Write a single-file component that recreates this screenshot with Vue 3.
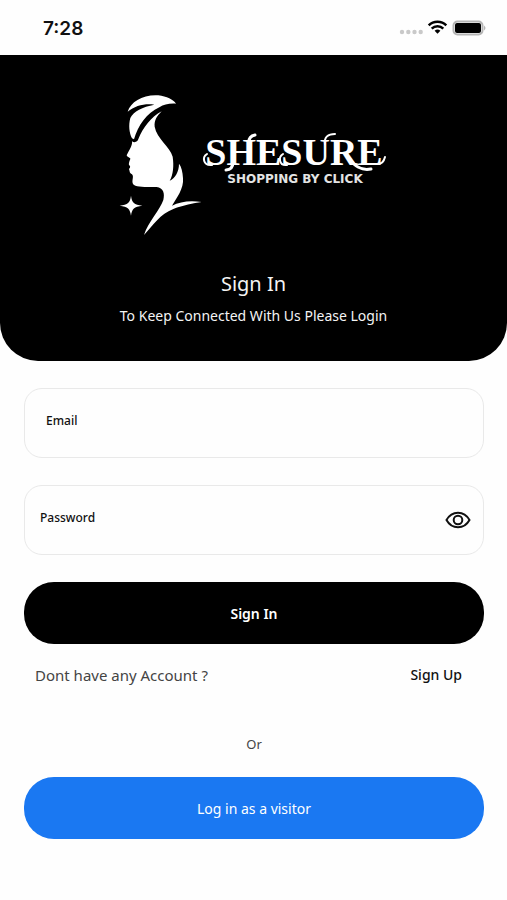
<script setup>
import { ref } from 'vue'

const email = ref('')
const password = ref('')
const visible = ref(false)
</script>

<template>
  <div class="screen">
    <div class="status">
      <span class="time">7:28</span>
      <svg class="indicators" width="88" height="16" viewBox="0 0 88 16" aria-hidden="true">
        <g fill="#c9c9c9">
          <circle cx="3" cy="12" r="2.200" />
          <circle cx="9.300" cy="12" r="2.200" />
          <circle cx="15.500" cy="12" r="2.200" />
          <circle cx="21.700" cy="12" r="2.200" />
        </g>
        <g fill="none" stroke="#000" stroke-width="2.500">
          <path d="M29.700 5.300a12.500 12.500 0 0 1 17.600 0" />
          <path d="M32.700 8.600a8.300 8.300 0 0 1 11.600 0" />
        </g>
        <path d="M38.500 13.700l-2.900-2.900a4.300 4.300 0 0 1 5.800 0z" />
        <rect x="54.500" y="1.500" width="29" height="13" rx="4" fill="#fff" stroke="#b5b5b5" stroke-width="2" />
        <rect x="56" y="3" width="26" height="10" rx="2" />
        <path d="M85 5.500q3 2.500 0 5z" fill="#b5b5b5" />
      </svg>
    </div>

    <header class="hero">
      <svg class="logo" viewBox="0 0 285 160" role="img" aria-label="Shesure, shopping by click">
        <g transform="translate(-1 0) scale(.33333)" fill="#fff">
          <path d="M53 80C62 50 100 28 145 31C170 34 190 44 198 56C176 55 162 58 148 67C110 84 84 122 72 163L66 160C58 145 55 120 61 99C70 80 98 65 133 59C104 55 75 62 53 80Z" />
          <path d="M155 79C124 95 98 130 86 160C83 172 73 174 66 169C68 181 58 195 50 211C52 218 61 217 61 222C57 231 56 236 57 240C63 245 60 249 57 252C60 260 58 264 66 268C73 276 64 286 69 297C77 307 104 306 140 306C160 308 165 325 160 345C150 375 115 410 102 450C130 420 150 387 190 372C220 360 250 355 275 351C240 345 210 350 186 362C200 340 222 310 219 280C218 260 214 245 207 236C207 260 195 280 179 287C190 270 192 240 188 215C180 185 140 160 134 125C132 105 142 92 155 79Z" />
          <path d="M63 332C66 353 72 359 97 362C72 365 66 371 63 392C60 371 54 365 29 362C54 359 60 353 63 332Z" />
        </g>
        <text class="wordmark" x="183" y="80" text-anchor="middle">SHESURE</text>
        <g class="swash">
          <path d="M96 69C91 72 92 81 101 80" />
          <path class="broad" d="M122 76C122 81 120 85 115 85" />
          <path class="broad" d="M138 60C137 54 139 51 144 50" />
          <path d="M172 69C167 72 168 81 176 80" />
          <path d="M214 59C213 52 217 49 224 49" />
          <path class="broad" d="M238 73C243 81 251 86 260 84" />
          <path d="M267 79C271 79 273 76 274 72" />
        </g>
        <text class="tagline" x="184" y="98" text-anchor="middle">SHOPPING BY CLICK</text>
      </svg>
      <h1>Sign In</h1>
      <p>To Keep Connected With Us Please Login</p>
    </header>

    <form class="form" @submit.prevent>
      <div class="field email">
        <label for="email">Email</label>
        <input id="email" v-model="email" type="email" autocomplete="email" />
      </div>
      <div class="field">
        <label for="password">Password</label>
        <input id="password" v-model="password" :type="visible ? 'text' : 'password'" autocomplete="current-password" />
        <button class="eye" type="button" aria-label="Show password" @click="visible = !visible">
          <svg width="26" height="18" viewBox="0 0 26 18" fill="none" stroke="#111" stroke-width="2">
            <path d="M1.500 9C4 4.500 8 1.700 13 1.700S22 4.500 24.500 9C22 13.500 18 16.300 13 16.300S4 13.500 1.500 9Z" />
            <circle cx="13" cy="9" r="4.300" />
          </svg>
        </button>
      </div>
      <button class="action primary" type="submit">Sign In</button>
      <div class="account">
        <span>Dont have any Account ?</span>
        <a href="#">Sign Up</a>
      </div>
      <div class="or">Or</div>
      <button class="action visitor" type="button">Log in as a visitor</button>
    </form>
  </div>
</template>

<style>
body {
  margin: 0;
  background: #fefefe;
}
</style>

<style scoped>
.screen {
  min-height: 100vh;
  font-family: "Noto Sans", "Open Sans", sans-serif;
  color: #111;
}
.status {
  display: flex;
  align-items: center;
  justify-content: space-between;
  height: 55px;
  padding: 0 20px 0 43px;
  box-sizing: border-box;
}
.time {
  padding-top: 2px;
  font: 600 19px/24px Inter, sans-serif;
}
.hero {
  display: flex;
  flex-direction: column;
  align-items: center;
  padding: 30px 16px 33px;
  background: #000;
  color: #f4f4f4;
  border-radius: 0 0 38px 38px;
}
.logo {
  width: 285px;
  height: 160px;
}
.wordmark {
  font: 700 38px "Liberation Serif", serif;
  fill: #fff;
}
.tagline {
  font: 700 12px "DejaVu Sans", sans-serif;
  fill: #e4e4e4;
}
.swash {
  fill: none;
  stroke: #fff;
  stroke-width: 2;
  stroke-linecap: round;
}
.broad {
  stroke-width: 3;
}
h1 {
  margin: 24px 0 0;
  font-size: 20px;
  font-weight: 400;
  line-height: 30px;
}
p {
  margin: 5px 0 0;
  font-size: 14px;
  line-height: 24px;
}
.form {
  display: flex;
  flex-direction: column;
  padding: 27px 23px 40px 24px;
}
.field {
  display: flex;
  align-items: center;
  gap: 12px;
  height: 70px;
  margin-bottom: 27px;
  padding: 0 12px 0 15px;
  box-sizing: border-box;
  border: 1px solid #e9e9e9;
  border-radius: 18px;
}
.email {
  padding-left: 21px;
}
label {
  padding-bottom: 4px;
  font-size: 12px;
  font-weight: 500;
  line-height: 20px;
}
input {
  flex: 1;
  min-width: 0;
  height: 40px;
  padding: 0;
  border: 0;
  outline: 0;
  background: transparent;
  font: inherit;
}
button {
  border: 0;
  cursor: pointer;
  font-family: inherit;
}
.eye {
  display: flex;
  padding: 0;
  background: transparent;
}
.action {
  height: 62px;
  padding: 0 16px;
  border-radius: 30px;
  color: #fff;
  font-size: 14px;
}
.primary {
  background: #000;
  font-weight: 600;
}
.account {
  display: flex;
  align-items: center;
  justify-content: space-between;
  padding: 18px 22px 0 11px;
  font-size: 15px;
  line-height: 26px;
  color: #444;
}
.account a {
  color: #111;
  font-size: 14px;
  font-weight: 500;
  text-decoration: none;
}
.or {
  padding: 44px 0 21px;
  text-align: center;
  font-size: 13px;
  line-height: 24px;
  color: #444;
}
.visitor {
  background: #1a78f2;
}
</style>
